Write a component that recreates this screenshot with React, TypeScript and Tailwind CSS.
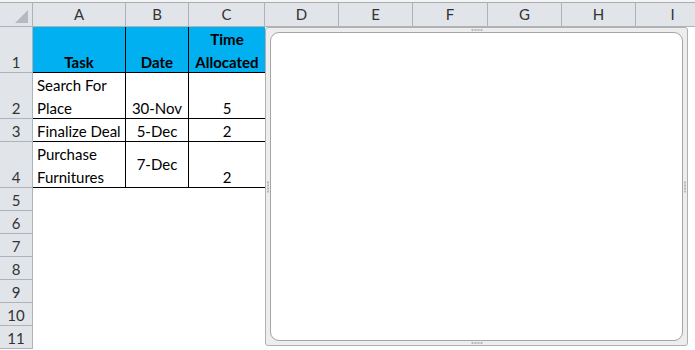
import React from 'react'

const cols = [
  { name: 'A', w: 'w-[93px]' },
  { name: 'B', w: 'w-[63px]' },
  { name: 'C', w: 'w-[76px]' },
  { name: 'D', w: 'w-[74px]' },
  { name: 'E', w: 'w-[74px]' },
  { name: 'F', w: 'w-[75px]' },
  { name: 'G', w: 'w-[74px]' },
  { name: 'H', w: 'w-[74px]' },
  { name: 'I', w: 'w-[74px]' },
]

const font = { fontFamily: 'Lato, "Liberation Sans", sans-serif' }

function RowHead({ n, h }: { n: number; h: string }) {
  return (
    <div className={`${h} w-[33px] shrink-0 bg-[#e1e5ea] border-r border-b border-[#aeb3b9] flex items-end justify-center text-[15px] leading-[20px] text-[#333]`}>
      {n}
    </div>
  )
}

function Dots({ vertical = false }: { vertical?: boolean }) {
  return (
    <div className={`flex ${vertical ? 'flex-col' : ''} gap-[1px]`}>
      {[0, 1, 2, 3].map((i) => (
        <span key={i} className="w-[2px] h-[2px] bg-[#b8b8b8]" />
      ))}
    </div>
  )
}

export default function App() {
  return (
    <div className="relative w-[695px] h-[350px] overflow-hidden bg-white text-black" style={font}>
      <div className="h-[3px] bg-[#f4f4f4] border-b border-[#a9adb2]" />

      {/* column headers */}
      <div className="flex h-[24px]">
        <div className="w-[33px] shrink-0 bg-[#e1e5ea] border-r border-b border-[#aeb3b9] relative">
          <div className="absolute right-[4px] bottom-[3px] w-0 h-0 border-l-[13px] border-l-transparent border-b-[13px] border-b-[#b6babf]" />
        </div>
        {cols.map((c) => (
          <div key={c.name} className={`${c.w} shrink-0 bg-[#e1e5ea] border-r border-b border-[#aeb3b9] flex items-center justify-center text-[15px] text-[#333]`}>
            {c.name}
          </div>
        ))}
      </div>

      {/* row 1 */}
      <div className="flex h-[46px] text-[15px]">
        <RowHead n={1} h="h-[46px]" />
        <div className="w-[93px] shrink-0 bg-[#00b0f0] border-r border-b border-black flex items-end justify-center font-bold">
          <span className="leading-[23px] -mb-[2px]">Task</span>
        </div>
        <div className="w-[63px] shrink-0 bg-[#00b0f0] border-r border-b border-black flex items-end justify-center font-bold">
          <span className="leading-[23px] -mb-[2px]">Date</span>
        </div>
        <div className="w-[76px] shrink-0 bg-[#00b0f0] border-b border-black flex items-end justify-center font-bold">
          <div className="flex flex-col items-center leading-[23px] -mb-[2px]">
            <span>Time</span>
            <span>Allocated</span>
          </div>
        </div>
      </div>

      {/* row 2 */}
      <div className="flex h-[46px] text-[15px]">
        <RowHead n={2} h="h-[46px]" />
        <div className="w-[93px] shrink-0 border-r border-b border-black flex items-end pl-[4px]">
          <div className="flex flex-col leading-[23px] -mb-[2px]">
            <span>Search For</span>
            <span>Place</span>
          </div>
        </div>
        <div className="w-[63px] shrink-0 border-r border-b border-black flex items-end justify-center">
          <span className="leading-[23px] -mb-[2px]">30-Nov</span>
        </div>
        <div className="w-[76px] shrink-0 border-b border-black flex items-end justify-center">
          <span className="leading-[23px] -mb-[2px]">5</span>
        </div>
      </div>

      {/* row 3 */}
      <div className="flex h-[23px] text-[15px]">
        <RowHead n={3} h="h-[23px]" />
        <div className="w-[93px] shrink-0 border-r border-b border-black flex items-end pl-[4px] whitespace-nowrap">
          <span className="leading-[20px]">Finalize Deal</span>
        </div>
        <div className="w-[63px] shrink-0 border-r border-b border-black flex items-end justify-center">
          <span className="leading-[20px]">5-Dec</span>
        </div>
        <div className="w-[76px] shrink-0 border-b border-black flex items-end justify-center">
          <span className="leading-[20px]">2</span>
        </div>
      </div>

      {/* row 4 */}
      <div className="flex h-[46px] text-[15px]">
        <RowHead n={4} h="h-[46px]" />
        <div className="w-[93px] shrink-0 border-r border-b border-black flex items-end pl-[4px]">
          <div className="flex flex-col leading-[23px] -mb-[2px]">
            <span>Purchase</span>
            <span>Furnitures</span>
          </div>
        </div>
        <div className="w-[63px] shrink-0 border-r border-b border-black flex items-center justify-center">
          <span className="leading-[23px]">7-Dec</span>
        </div>
        <div className="w-[76px] shrink-0 border-b border-black flex items-end justify-center">
          <span className="leading-[23px] -mb-[2px]">2</span>
        </div>
      </div>

      {[5, 6, 7, 8, 9, 10, 11].map((n) => (
        <div key={n} className="flex h-[23px]">
          <RowHead n={n} h="h-[23px]" />
        </div>
      ))}

      {/* chart object */}
      <div className="absolute left-[265px] top-[27px] w-[423px] h-[319px] bg-[#ededed] border border-[#b0b0b0] rounded-[3px] p-[4px]">
        <div className="w-full h-full bg-white border border-[#a5a5a5] rounded-[9px]" />
        <div className="absolute top-[1px] left-1/2 -translate-x-1/2"><Dots /></div>
        <div className="absolute bottom-[1px] left-1/2 -translate-x-1/2"><Dots /></div>
        <div className="absolute right-[1px] top-1/2 -translate-y-1/2"><Dots vertical /></div>
        <div className="absolute left-[1px] top-1/2 -translate-y-1/2"><Dots vertical /></div>
      </div>
    </div>
  )
}
